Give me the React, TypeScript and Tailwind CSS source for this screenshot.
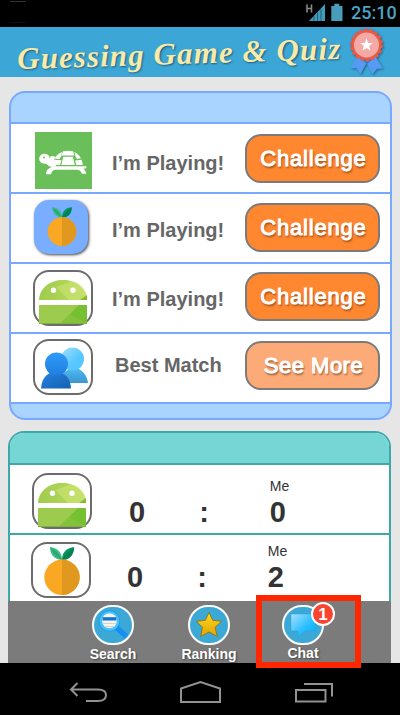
import React from "react";

const sans = "font-['Liberation_Sans',Arial,sans-serif]";

function Turtle() {
  return (
    <svg className="block h-[57px] w-[57px] shrink-0" viewBox="0 0 57 57">
      <rect width="57" height="57" fill="#6abf5a" />
      <g fill="#fff">
        <ellipse cx="9.500" cy="26.800" rx="5.300" ry="5" />
        <path d="M12 30l4-6 4 .5-1 5.500 2 2.500v2h-6.500L10 31z" />
        <path d="M28 19.300C31 18.500 35 18.500 38 19.300L39.500 23.500H26.500z" />
        <path d="M28.300 24.800h9.500l2 8.200H26.300z" />
        <path d="M26.700 20c-3.200 1.500-5.500 3.800-7.200 6.500l4.800.7 2.300-3.500zM39.400 20c3.200 1.500 5.300 3.800 6.500 6.300l-4 .7-1.500-3z" />
        <path d="M19 27.700L18 30l2.500 3h4.500l1.500-4.700zM46.500 27.700c.8 1.800 1.200 3.500 1.300 5.300h-6.500l-1.200-4.500z" />
        <path d="M16 34.300h35.300v2l-3 .4c1.700 1.200 2.700 3 3 5h-4.500c-.7-2.200-1.800-3.700-4.500-4H20c-2.200.5-3.500 1.800-4 4.500h-5c0-3.200 1.500-5.700 4.500-6.500z" />
      </g>
      <circle cx="9" cy="25.500" r="1" fill="#6abf5a" />
    </svg>
  );
}

function Orange({ className }: { className: string }) {
  return (
    <svg className={className} viewBox="0 0 36 48">
      <path d="M18 13C9.500 12.500 6.200 7.500 6 .300c7 .200 12 4.700 12 12.700z" fill="#3dc08a" />
      <path d="M18 13C12 10.500 8 6 6 .300c5.500 2.500 10 6.500 12 12.700z" fill="#2fa877" />
      <path d="M18 13C18 5 23 .500 30 .300c-.2 7.500-4 12.500-12 12.700z" fill="#079a67" />
      <path d="M18 13C20.500 7 25 3 30 .300c-.2 7.500-4 12.500-12 12.700z" fill="#008454" />
      <circle cx="18" cy="30.300" r="17.700" fill="#faa724" />
      <path d="M18 12.600a17.700 17.700 0 0 1 0 35.400z" fill="#e1981f" />
    </svg>
  );
}

function Android() {
  return (
    <svg className="absolute left-[4px] top-[8px] h-[45px] w-[48px]" viewBox="0 0 48 45">
      <defs>
        <linearGradient id="head" x1="0" x2="1">
          <stop stopColor="#9fcc4c" />
          <stop offset="1" stopColor="#badb62" />
        </linearGradient>
      </defs>
      <path d="M0 20C.500 8 11 0 24 0s23.500 8 24 20z" fill="url(#head)" />
      <path d="M17 7L30 20h12L48 15C46 8 41 3 34 1z" fill="#d2e878" opacity=".5" />
      <path d="M41 20l7-5v5z" fill="#83bc32" />
      <circle cx="14.500" cy="10.300" r="2.700" fill="#fff" />
      <circle cx="34" cy="10.300" r="2.700" fill="#fff" />
      <path d="M0 25h48v18.500H0z" fill="#9ccb4d" />
      <path d="M40 25h8v18.500H21z" fill="#84c23b" />
      <path d="M31 34.500L40 25h8v18.500z" fill="#76c131" />
      <path d="M0 43.500h48" stroke="#7fb23c" />
    </svg>
  );
}

function People() {
  return (
    <svg className="absolute left-[6px] top-[6px] h-[42px] w-[47px]" viewBox="0 0 47 42">
      <defs>
        <linearGradient id="back" x1="0" y1="0" x2="1" y2="1">
          <stop stopColor="#a6deff" />
          <stop offset=".6" stopColor="#57c7ff" />
        </linearGradient>
        <linearGradient id="torsoBack" x1="0" y1="0" x2="0" y2="1">
          <stop stopColor="#4bb8f2" />
          <stop offset="1" stopColor="#3b96cf" />
        </linearGradient>
        <linearGradient id="front" x1="0" y1="0" x2="0" y2="1">
          <stop stopColor="#2f9bfa" />
          <stop offset="1" stopColor="#1f7fe0" />
        </linearGradient>
        <linearGradient id="torso" x1="0" y1="0" x2="1" y2="1">
          <stop stopColor="#2582e2" />
          <stop offset="1" stopColor="#1560ae" />
        </linearGradient>
      </defs>
      <path d="M19 36c1-9 4-12 11-14h8c5 3 8 7 9 14z" fill="url(#torsoBack)" />
      <circle cx="31.500" cy="12" r="11.500" fill="url(#back)" />
      <path d="M0 41.500C.700 33 4 28.500 9 26h12c5 2.500 8.500 7 9 15.500z" fill="url(#torso)" />
      <ellipse cx="15.500" cy="17" rx="11.500" ry="11.500" fill="url(#front)" />
    </svg>
  );
}

function Framed({ children }: { children: React.ReactNode }) {
  return (
    <div className="relative h-14 w-[60px] shrink-0 rounded-[16px] border-2 border-[#6c6c6c] bg-white">
      {children}
    </div>
  );
}

function Action({ label, className }: { label: string; className: string }) {
  return (
    <button
      className={`ml-auto mr-[10px] flex h-[49px] w-[135px] shrink-0 items-center justify-center rounded-[16px] border-2 border-[#7b7b7b] pl-[2px] text-[22px] leading-none text-white [-webkit-text-stroke:1px_white] [stroke-linejoin:round] [text-shadow:1px_2px_2px_rgba(90,50,20,0.7)] ${className}`}
    >
      <span>{label}</span>
    </button>
  );
}

function NavItem({ label, className, children, labelClass }: { label: string; className: string; children: React.ReactNode; labelClass: string }) {
  return (
    <div className={`flex shrink-0 flex-col items-center ${className}`}>
      {children}
      <span className={`text-[14px] font-bold leading-none text-white [text-shadow:1px_1px_2px_rgba(0,0,0,0.5)] ${labelClass}`}>{label}</span>
    </div>
  );
}

const disc = "relative flex shrink-0 items-center justify-center rounded-full border-2 border-white bg-[#3ca8d6]";

export default function App() {
  return (
    <div className={`relative flex h-[715px] w-[400px] flex-col overflow-hidden bg-[#e6e6e6] ${sans}`}>
      <div className="flex h-[27px] shrink-0 items-start bg-black">
        <div className="ml-[10px] flex w-4 flex-col">
          <div className="mt-px h-px bg-[#333]" />
          <div className="mt-5 h-px bg-[#0b1513]" />
        </div>
        <svg className="ml-[279px] mt-[3px] h-[19px] w-[39px]" viewBox="0 0 39 19">
          <path d="M2 1.500v8M6.500 1.500v8M2 5.500h4.500" stroke="#888" strokeWidth="1.600" fill="none" />
          <path d="M4 18L20 1v17z" fill="#3f9cba" />
          <path d="M9 13v5M12.500 10v8M16 6v12" stroke="#1d4f60" strokeWidth=".8" />
          <path d="M26.300 3h3V.800h5V3h3.200v15H26.300z" fill="#4a9dba" />
        </svg>
        <span className="ml-[7px] mt-[3px] font-[Roboto,sans-serif] text-[18px] font-medium leading-[20px] text-[#4aa4c6]">25:10</span>
      </div>

      <header className="flex h-[50px] shrink-0 items-start bg-[#3ca7d7]">
        <h1 className="ml-[17px] mt-[11px] w-[326px] shrink-0 -rotate-[1.8deg] whitespace-nowrap font-['Liberation_Serif',serif] text-[31px] font-bold italic leading-none tracking-[1.1px] text-[#f8eaaa] [text-shadow:1px_1px_2px_rgba(20,60,80,0.7)]">
          Guessing Game &amp; Quiz
        </h1>
        <svg className="ml-[5px] mt-[1px] h-[48px] w-[38px] drop-shadow-[1px_1px_1px_rgba(0,0,0,0.4)]" viewBox="0 0 38 48">
          <path d="M9 28L2.500 40l6 .3 4 5.900L20 32zM27 28l8 12.500-6 .300-4.500 5.500L17 32z" fill="#559bf4" />
          <path d="M9 28l10 8 9-8z" fill="#3978ca" />
          <circle cx="18.500" cy="17" r="15" fill="#e95a47" stroke="#e95a47" strokeWidth="3" strokeDasharray="3 2.240" />
          <circle cx="18.500" cy="17" r="12.500" fill="#f3aaa5" />
          <path d="M18.500 10.500l1.700 4.500 4.500.1-3.500 2.900 1.200 4.500-3.900-2.600-3.900 2.600 1.200-4.500-3.500-2.900 4.500-.1z" fill="#fff" />
        </svg>
      </header>

      <main className="flex min-h-0 flex-1 flex-col overflow-hidden">
        <section className="ml-[9px] mt-[14px] flex h-[329px] w-[383px] shrink-0 flex-col overflow-hidden rounded-[16px] border-2 border-[#77aaff] bg-[#a8d4ff] text-[20px] font-bold text-[#666]">
          <div className="h-[31px] shrink-0 border-b-2 border-[#77aaff]" />
          <div className="flex h-[70px] shrink-0 items-start border-b-2 border-[#77aaff] bg-white pl-6 pt-2">
            <Turtle />
            <span className="ml-5 mt-[21px] leading-none">I’m Playing!</span>
            <Action label="Challenge" className="mt-[2px] bg-[#ff8730] font-normal tracking-[0.8px]" />
          </div>
          <div className="flex h-[70px] shrink-0 items-start border-b-2 border-[#77aaff] bg-white pl-[23px] pt-[6px]">
            <div className="flex h-[54px] w-[54px] shrink-0 items-start justify-center rounded-[15px] bg-[#78adff] pt-[7px] shadow-[1px_1px_3px_rgba(0,0,0,0.75)]">
              <Orange className="ml-[1px] h-[39px] w-[30px]" />
            </div>
            <span className="ml-[24px] mt-[20px] leading-none">I’m Playing!</span>
            <Action label="Challenge" className="mt-[3px] bg-[#ff8730] font-normal tracking-[0.8px]" />
          </div>
          <div className="flex h-[70px] shrink-0 items-start border-b-2 border-[#77aaff] bg-white pl-[22px] pt-[6px]">
            <Framed><Android /></Framed>
            <span className="ml-[19px] mt-[19px] leading-none">I’m Playing!</span>
            <Action label="Challenge" className="mt-[2px] bg-[#ff8730] font-normal tracking-[0.8px]" />
          </div>
          <div className="flex h-[70px] shrink-0 items-start border-b-2 border-[#77aaff] bg-white pl-[22px] pt-[5px]">
            <Framed><People /></Framed>
            <span className="ml-[22px] mt-[16px] leading-none">Best Match</span>
            <Action label="See More" className="mt-[2px] bg-[#fcab78] font-normal tracking-[0.5px]" />
          </div>
        </section>

        <section className="ml-2 mt-[11px] flex h-[170px] w-[383px] shrink-0 flex-col overflow-hidden rounded-t-[16px] border-2 border-b-0 border-[#3ea8a8] bg-white text-[#333]">
          <div className="h-8 shrink-0 border-b-2 border-[#3ea8a8] bg-[#76d5d5]" />
          <div className="flex h-[70px] shrink-0 items-start border-b-2 border-[#3ea8a8] pl-[22px] pt-2">
            <Framed><Android /></Framed>
            <span className="ml-[37px] mt-[25px] text-[29px] font-bold leading-none">0</span>
            <span className="ml-[54px] mt-[25px] text-[29px] font-bold leading-none">:</span>
            <div className="ml-[61px] mt-[6px] flex flex-col items-start">
              <span className="text-[14px] leading-none">Me</span>
              <span className="mt-[5px] text-[29px] font-bold leading-none">0</span>
            </div>
          </div>
          <div className="flex flex-1 items-start pl-[21px] pt-[7px]">
            <Framed><Orange className="absolute left-[11px] top-[3px] h-[48px] w-[36px]" /></Framed>
            <span className="ml-[36px] mt-[21px] text-[29px] font-bold leading-none">0</span>
            <span className="ml-[54px] mt-[21px] text-[29px] font-bold leading-none">:</span>
            <div className="ml-[61px] mt-[2px] flex flex-col items-start">
              <span className="text-[14px] leading-none">Me</span>
              <span className="mt-[5px] text-[29px] font-bold leading-none">2</span>
            </div>
          </div>
        </section>

        <nav className="ml-2 flex h-[62px] w-[383px] shrink-0 items-start bg-[#7b7b7b]">
          <NavItem label="Search" className="ml-[81px] mt-1 w-[48px]" labelClass="mt-[2px]">
            <div className={`${disc} h-10 w-[42px]`}>
              <svg className="h-[32px] w-[34px] shrink-0" viewBox="0 0 34 32">
                <path d="M20.500 18.500l10 9" stroke="#168ff2" strokeWidth="5.500" />
                <circle cx="13.500" cy="12" r="8.800" fill="#f3f4ef" stroke="#42c2ff" strokeWidth="3" />
                <path d="M6 11.500c.5-4.500 3.500-7 7.500-7s7 2.500 7.500 7z" fill="#f3f4ef" />
                <path d="M6.500 11.500V8.200h14v3.300z" fill="#1474cd" />
                <path d="M6.500 14.500h14M8.500 17.500h10" stroke="#d8d3c6" />
                <circle cx="13.500" cy="12" r="10.300" fill="none" stroke="#1894df" strokeWidth=".7" />
              </svg>
            </div>
          </NavItem>
          <NavItem label="Ranking" className="ml-[42px] mt-1 w-[60px]" labelClass="mt-[2px]">
            <div className={`${disc} h-10 w-[42px]`}>
              <svg className="h-[28px] w-[28px]" viewBox="0 0 30 30">
                <defs><linearGradient id="gold" x2="0" y2="1"><stop stopColor="#ffd91c" /><stop offset="1" stopColor="#e3a204" /></linearGradient></defs>
                <path d="M15 1.500l4 8.500 9.500 1-7 6.500 2.500 10L15 22.500l-9 5 2-10L1.500 11l9.500-1z" fill="url(#gold)" stroke="#87771d" strokeLinejoin="round" />
              </svg>
            </div>
          </NavItem>
          <NavItem label="Chat" className="ml-[35px] mt-1 w-[58px]" labelClass="mt-[1px]">
            <div className={`${disc} h-10 w-[42px]`}>
              <svg className="h-[26px] w-[28px]" viewBox="0 0 28 26">
                <defs><linearGradient id="bubble" x2="1" y2="1"><stop stopColor="#a9e0ff" /><stop offset=".6" stopColor="#25bdff" /><stop offset="1" stopColor="#0aaafc" /></linearGradient></defs>
                <path d="M2.500 2h23q1 0 1 1v15q0 1-1 1H16l-7 6v-6H3q-1-.2-1-1.200V3q0-1 .5-1z" fill="url(#bubble)" stroke="#249ad0" strokeWidth=".4" />
              </svg>
              <span className="absolute -right-[13px] -top-[5px] flex h-6 w-6 items-center justify-center rounded-full border-2 border-white bg-[#f7452f] text-[17px] font-bold leading-none text-white">1</span>
            </div>
          </NavItem>
        </nav>
      </main>

      <footer className="flex h-[52px] shrink-0 items-start bg-black pt-4">
        <svg className="ml-[68px] h-[26px] w-10" viewBox="0 0 40 26" fill="none" stroke="#929292" strokeWidth="2">
          <path d="M9.500 4L3 10.500 9.500 17M3 10.500h27c5 0 8 1.800 8 5.500s-3 6-8 6H18" />
        </svg>
        <svg className="ml-[71px] h-[26px] w-[43px]" viewBox="0 0 43 26" fill="none" stroke="#929292" strokeWidth="2">
          <path d="M2 23V9.500L21.500 3 41 9.500V23z" />
        </svg>
        <svg className="ml-[71px] h-[26px] w-[42px]" viewBox="0 0 42 26" fill="none" stroke="#929292" strokeWidth="2">
          <path d="M3 11h29.500v11.500H3zM11 5h28v12.500" />
        </svg>
      </footer>

      <div className="pointer-events-none absolute left-[256px] top-[595px] h-[73px] w-[105px] border-[6px] border-[#ff2600]" />
    </div>
  );
}
